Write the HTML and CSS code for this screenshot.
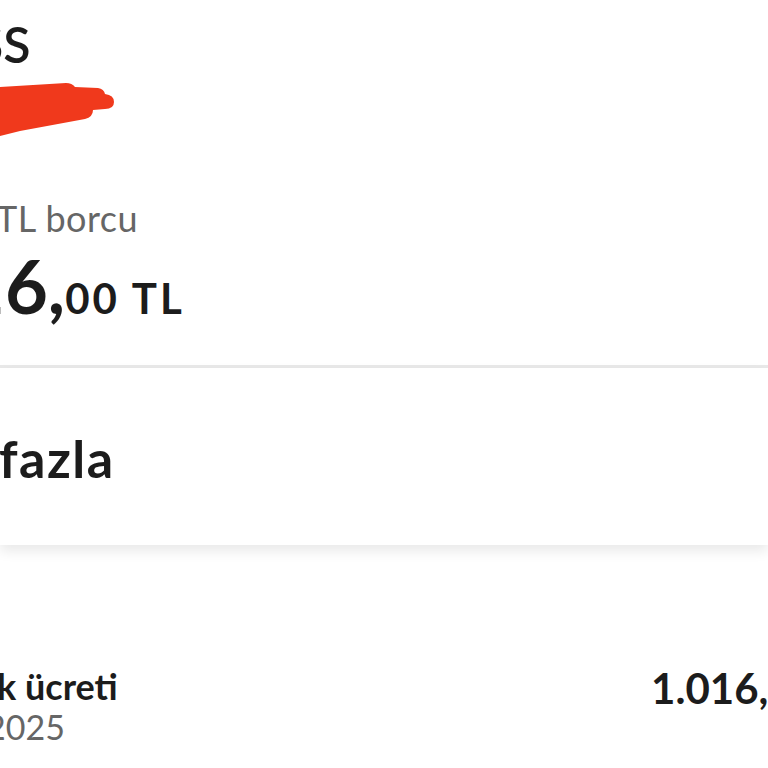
FILE: index.html
```html
<!DOCTYPE html>
<html lang="tr">
<head>
<meta charset="utf-8">
<link rel="stylesheet" href="styles.css">
</head>
<body>
<div class="page">
  <section class="top">
    <h1 class="name">SS</h1>
    <svg class="scribble" width="120" height="60" viewBox="0 0 120 60">
      <path d="M0 7 L66 3 Q72 3 75 7 L98 8 Q104 9 105 14 Q114 15 114 22 Q114 29 105 29 L93 30 Q93 37 85 39 L20 51 L0 56 Z" fill="#f0391c"/>
    </svg>
    <div class="debt-label">TL borcu</div>
    <div class="debt-amount"><span class="big">16,</span><span class="small">00 TL</span></div>
  </section>
  <section class="card">
    <div class="card-text">fazla</div>
  </section>
  <section class="list">
    <div class="row">
      <div class="row-left">
        <div class="row-title">k ücreti</div>
        <div class="row-date">2025</div>
      </div>
      <div class="row-amount">1.016,00 TL</div>
    </div>
  </section>
</div>
</body>
</html>
```
FILE: styles.css
```css
html, body {
  margin: 0;
  padding: 0;
  background: #ffffff;
}
body {
  width: 768px;
  height: 768px;
  overflow: hidden;
  font-family: "Lato", "Noto Sans", sans-serif;
  color: #1c1c1c;
}
.page {
  display: flex;
  flex-direction: column;
}
.top {
  display: flex;
  flex-direction: column;
  padding-top: 12px;
  height: 368px;
  box-sizing: border-box;
  border-bottom: 3px solid #e9e9e9;
}
.name {
  margin: 0 0 0 -24px;
  font-size: 50px;
  font-weight: 600;
  line-height: 64px;
}
.scribble {
  display: block;
  margin-top: 4px;
}
.debt-label {
  margin: 58px 0 0 -4px;
  font-size: 36px;
  color: #666666;
  line-height: 40px;
  letter-spacing: 0.5px;
}
.debt-amount {
  margin: 8px 0 0 -38px;
  display: flex;
  align-items: baseline;
  font-weight: 700;
  line-height: 80px;
}
.debt-amount .big {
  font-size: 74px;
}
.debt-amount .small {
  font-size: 42px;
  letter-spacing: 3px;
  margin-left: 0;
}
.card {
  height: 177px;
  box-sizing: border-box;
  padding-top: 60px;
  background: #ffffff;
  box-shadow: 0 6px 12px rgba(0, 0, 0, 0.09);
}
.card-text {
  font-size: 52px;
  line-height: 60px;
  font-weight: 700;
  letter-spacing: 1.5px;
  margin-left: -1px;
}
.list {
  padding-top: 121px;
}
.row {
  display: flex;
  justify-content: space-between;
  align-items: flex-start;
}
.row-title {
  font-size: 36px;
  font-weight: 700;
  margin-left: -3px;
  line-height: 40px;
}
.row-date {
  font-size: 34px;
  color: #666666;
  margin: 1px 0 0 -14px;
  line-height: 40px;
}
.row-amount {
  font-size: 42px;
  font-weight: 700;
  margin: 2px -105px 0 0;
  line-height: 40px;
}
```
